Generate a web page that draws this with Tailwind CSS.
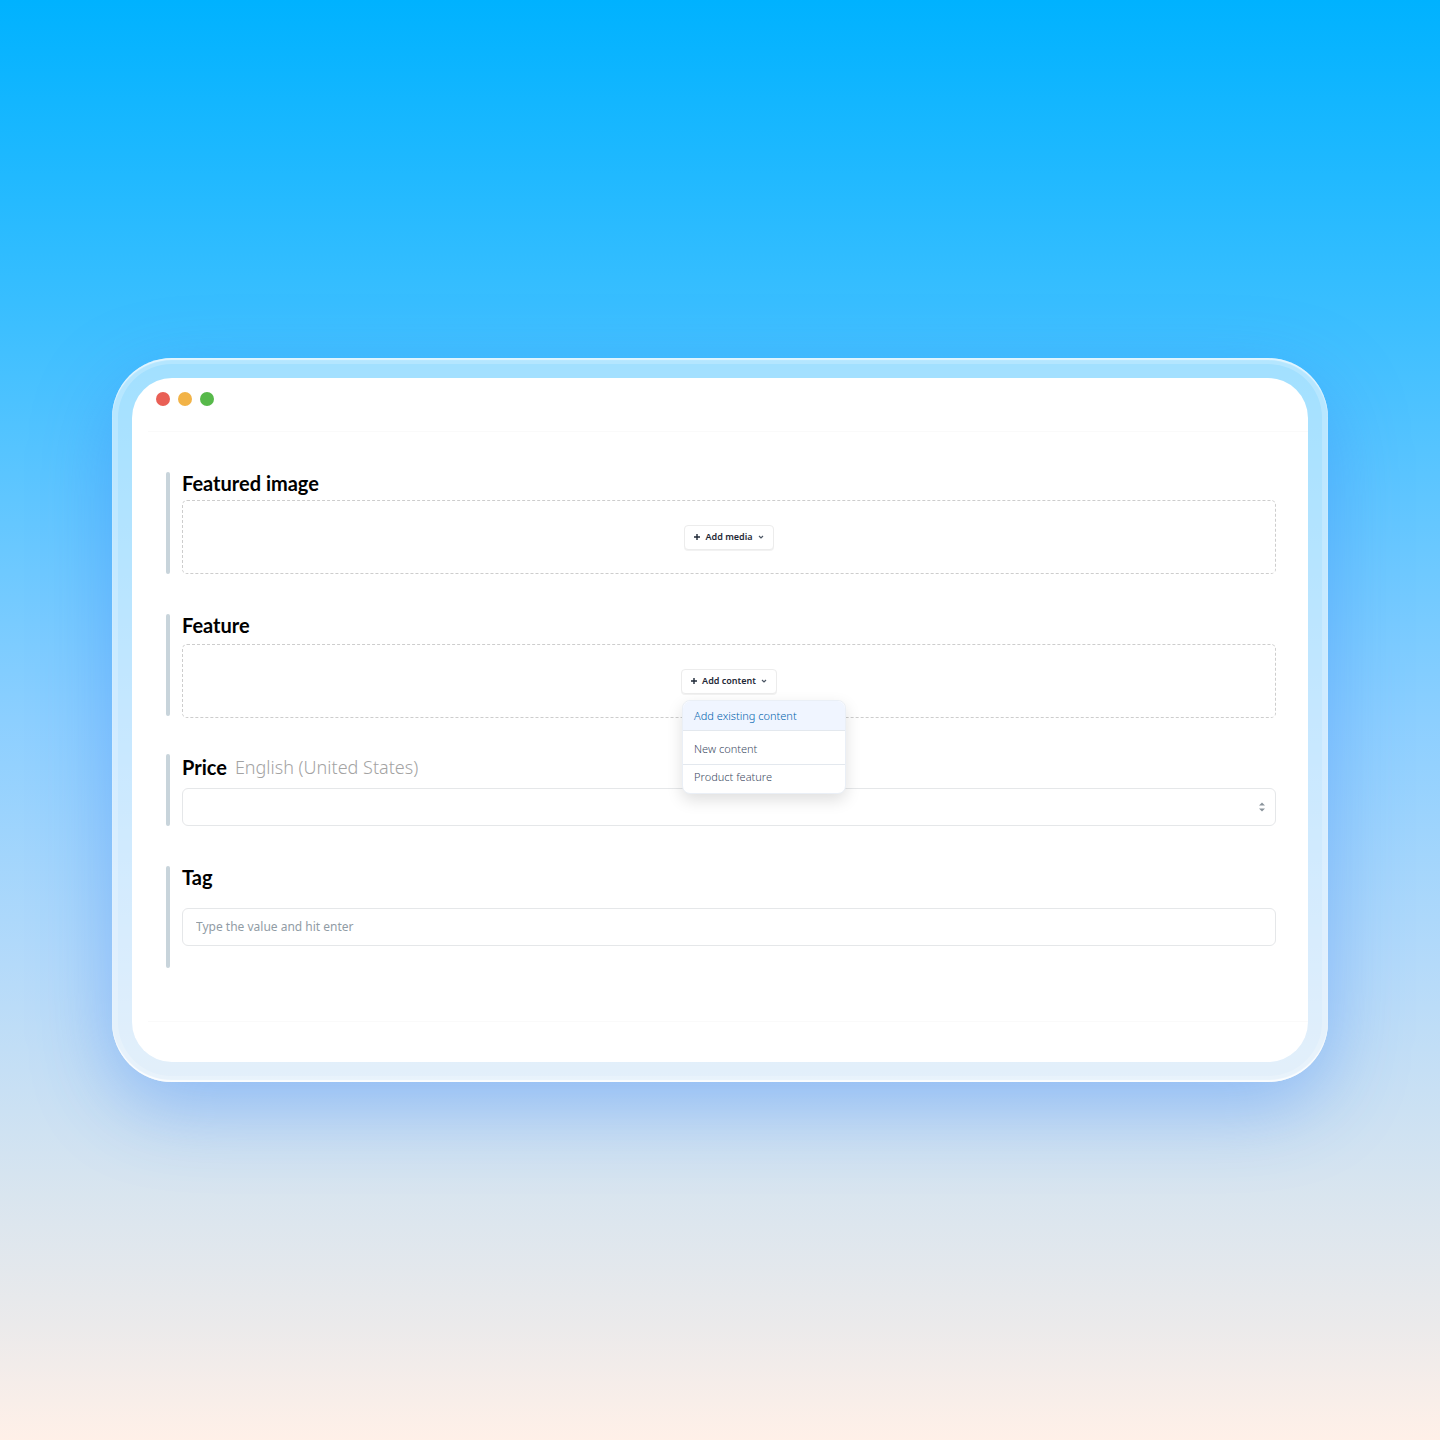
<!DOCTYPE html>
<html lang="en">
<head>
  <meta charset="UTF-8" />
  <meta name="viewport" content="width=device-width, initial-scale=1.0"/>
  <title>Edit content</title>
  <script src="https://cdn.jsdelivr.net/npm/@tailwindcss/browser@4"></script>
</head>
<body class="min-h-screen flex items-center justify-center px-6 py-10 font-['Noto_Sans',sans-serif] bg-[linear-gradient(180deg,#00b2ff_0%,#38beff_21%,#8ccfff_50%,#b4dafa_67%,#d9e5ef_83%,#ebeaeb_92%,#fff0e8_100%)]">

  <!-- glass frame -->
  <div class="w-full max-w-[1216px] rounded-[60px] p-5 bg-white/50 shadow-[0_24px_80px_rgba(50,125,245,0.4),inset_0_2px_1px_rgba(255,255,255,0.6),inset_0_-2px_1px_rgba(255,255,255,0.8),inset_0_0_0_6px_rgba(255,255,255,0.2)]">
    <main class="bg-white rounded-[40px]">

      <header class="flex items-start gap-2 h-[54px] ml-4 pt-[14px] pl-2 border-b border-[#fafafa]">
        <span class="size-[14px] rounded-full bg-[#e95f55]"></span>
        <span class="size-[14px] rounded-full bg-[#f2b347]"></span>
        <span class="size-[14px] rounded-full bg-[#57b94a]"></span>
      </header>

      <form class="pt-10 pl-[34px] pr-8 pb-[53px]">

        <section class="flex gap-3 mb-10">
          <div class="w-1 rounded-full bg-[#c8d4db]"></div>
          <div class="flex-1">
            <h2 class="h-7 font-['Lato'] font-bold text-[20px] leading-[22px] text-black">Featured image</h2>
            <div class="h-[74px] flex items-center justify-center border border-dashed border-[#cdcdcd] rounded-[5px]">
              <button type="button" class="h-[25px] flex items-center gap-1 px-2 rounded border border-[#ececec] bg-white shadow-2xs text-[9px] font-semibold text-[#1f2937]">
                <svg class="size-2" viewBox="0 0 8 8" fill="none" stroke="currentColor" stroke-width="1.4"><path d="M4 1v6M1 4h6"/></svg>
                Add media
                <svg class="size-2" viewBox="0 0 8 8" fill="none" stroke="#4b5563" stroke-width="1.2"><path d="M2 3l2 2 2-2"/></svg>
              </button>
            </div>
          </div>
        </section>

        <section class="flex gap-3 mb-9">
          <div class="w-1 mb-0.5 rounded-full bg-[#c8d4db]"></div>
          <div class="flex-1">
            <h2 class="h-[30px] font-['Lato'] font-bold text-[20px] leading-[22px] text-black">Feature</h2>
            <div class="h-[74px] flex items-center justify-center border border-dashed border-[#cdcdcd] rounded-[5px]">
              <div class="relative">
                <button type="button" class="h-[25px] flex items-center gap-1 px-2 rounded border border-[#ececec] bg-white shadow-2xs text-[9px] font-semibold text-[#1f2937]">
                  <svg class="size-2" viewBox="0 0 8 8" fill="none" stroke="currentColor" stroke-width="1.4"><path d="M4 1v6M1 4h6"/></svg>
                  Add content
                  <svg class="size-2" viewBox="0 0 8 8" fill="none" stroke="#4b5563" stroke-width="1.2"><path d="M2 3l2 2 2-2"/></svg>
                </button>
                <ul class="absolute left-px top-[31px] z-10 w-[164px] rounded-lg bg-white border border-[#eaeff6] text-[11px] font-light text-[#3d4a5f] shadow-[0_6px_16px_rgba(0,0,0,0.13)]">
                  <li><button type="button" class="block w-full h-[29px] px-[11px] pt-0.5 text-left rounded-t-lg bg-[#f0f5ff] text-[#0062ad]">Add existing content</button></li>
                  <li><button type="button" class="block w-full h-[35px] px-[11px] pt-1 text-left border-y border-[#e3e8ee]">New content</button></li>
                  <li><button type="button" class="block w-full h-7 px-[11px] pb-0.5 text-left">Product feature</button></li>
                </ul>
              </div>
            </div>
          </div>
        </section>

        <section class="flex gap-3 mb-10">
          <div class="w-1 rounded-full bg-[#c8d4db]"></div>
          <div class="flex-1">
            <label for="price" class="h-[34px] flex gap-2 leading-[26px] text-[18px]">
              <span class="font-['Lato'] font-bold text-[20px] text-black">Price</span>
              <span class="font-light text-[#a3a3a3]">English (United States)</span>
            </label>
            <div class="relative">
              <input id="price" type="text" class="block w-full h-[38px] px-[13px] border border-[#e5e7e9] rounded-[6px] text-xs"/>
              <svg class="absolute right-2.5 top-3 w-2 h-3.5" viewBox="0 0 8 14" fill="#8b949c"><path d="M4 2.5L7 5.5H1zM4 11.5L1 8.5h6z"/></svg>
            </div>
          </div>
        </section>

        <section class="flex gap-3">
          <div class="w-1 rounded-full bg-[#c8d4db]"></div>
          <div class="flex-1 pb-[22px]">
            <label for="tag" class="block h-[42px] font-['Lato'] font-bold text-[20px] leading-[22px] text-black">Tag</label>
            <input id="tag" type="text" placeholder="Type the value and hit enter" class="block w-full h-[38px] px-[13px] pb-0.5 border border-[#e5e7e9] rounded-[6px] text-xs placeholder:text-[#919ca5]"/>
          </div>
        </section>

      </form>

      <footer class="h-[41px] ml-4 border-t border-[#fafafa]"></footer>
    </main>
  </div>

</body>
</html>
